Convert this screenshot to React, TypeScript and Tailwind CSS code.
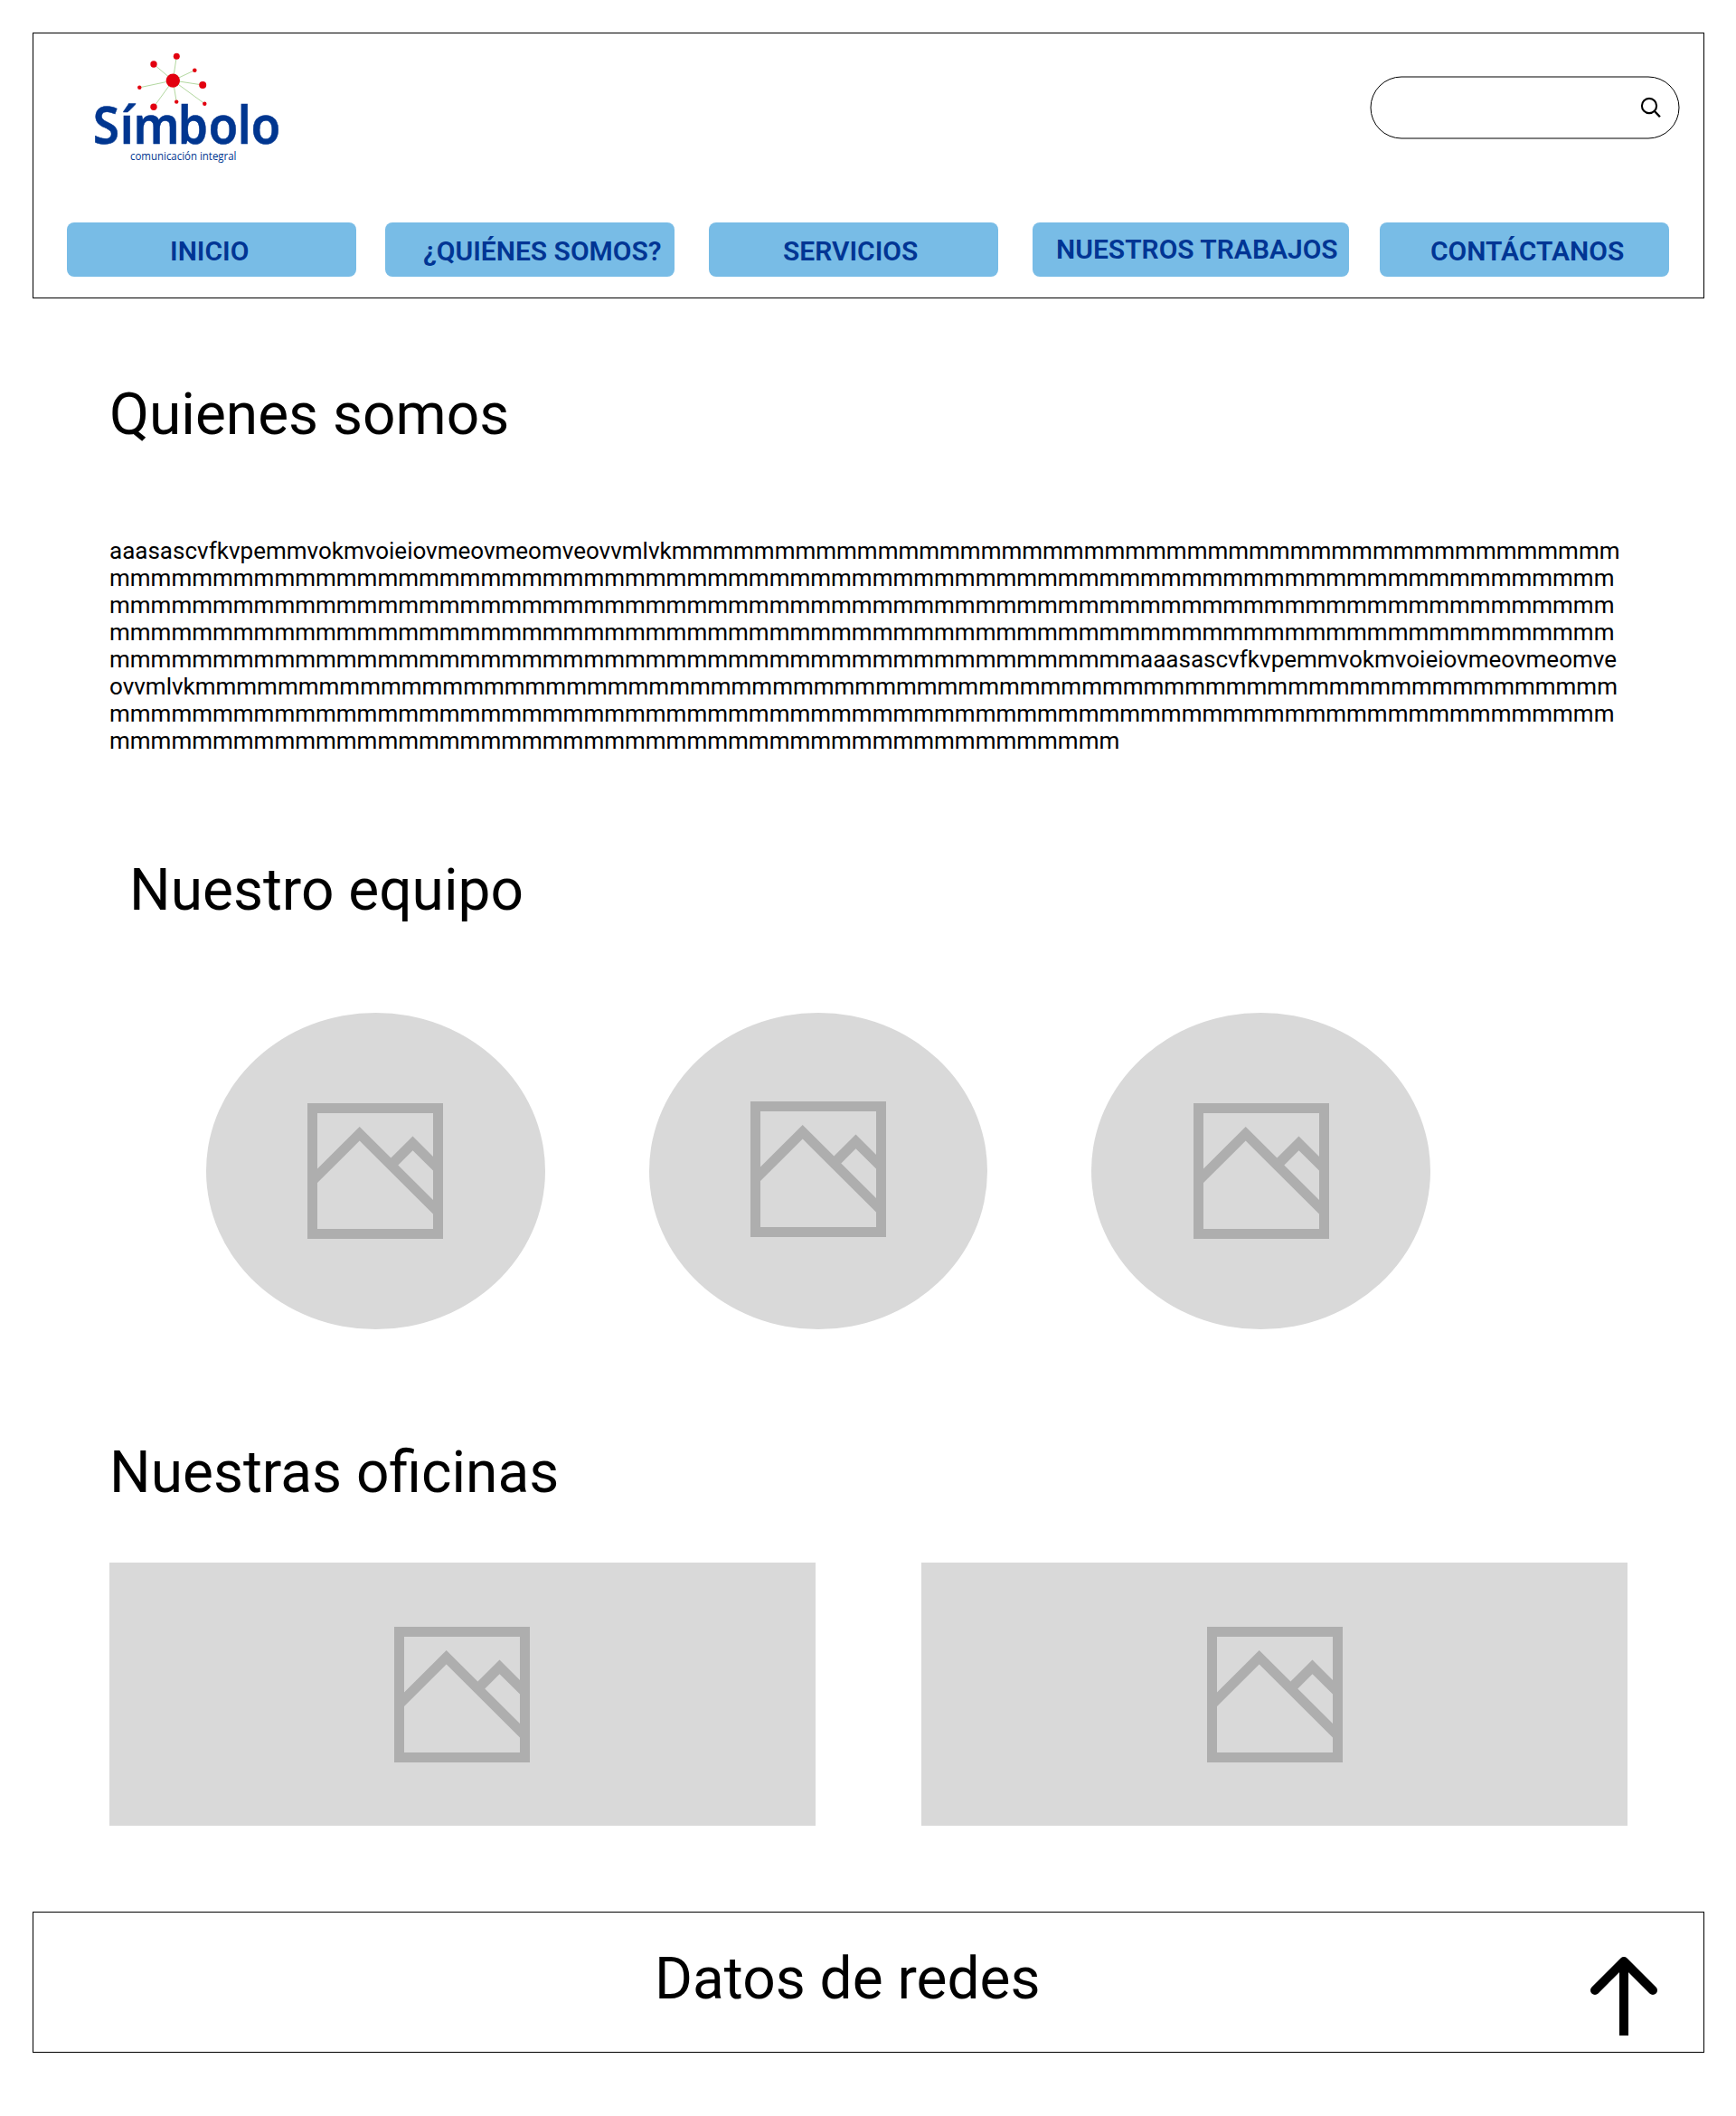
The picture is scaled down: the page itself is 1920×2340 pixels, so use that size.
const PHRASE = "aaasascvfkvpemmvokmvoieiovmeovmeomveovvmlvk";
const COPY = PHRASE + "m".repeat(315) + PHRASE + "m".repeat(191);

const HEADING = "h-[75px] text-[64px] leading-[75px] whitespace-nowrap";

const NAV = [
  { label: "INICIO", box: "w-[320px] pl-[114px] pt-[14px]" },
  { label: "¿QUIÉNES SOMOS?", box: "ml-[32px] w-[320px] pl-[42px] pt-[14px]" },
  { label: "SERVICIOS", box: "ml-[38px] w-[320px] pl-[82px] pt-[14px]" },
  { label: "NUESTROS TRABAJOS", box: "ml-[38px] w-[350px] pl-[26px] pt-[12px]" },
  { label: "CONTÁCTANOS", box: "ml-[34px] w-[320px] pl-[56px] pt-[14px]" },
];

const NODES = [
  [115.3, 22.3, 3.5],
  [90, 31, 3.7],
  [135.3, 37.7, 2.3],
  [144.2, 54, 4],
  [74.3, 56.8, 2.2],
  [115.2, 72.6, 2.2],
  [146.3, 74.7, 2.2],
  [90, 78.3, 3.7],
];

function Logo() {
  return (
    <svg className="h-40 w-[260px]" viewBox="0 0 260 160">
      <g stroke="#a9d294" strokeWidth="0.9">
        {NODES.map(([x, y]) => (
          <line key={`${x}-${y}`} x1="111.3" y1="49" x2={x} y2={y} />
        ))}
      </g>
      <g fill="#003690">
        <text
          x="24.8 57.4 73.4 127 163.6 198.7 214.7"
          y="118.7"
          transform="scale(0.92 1)"
          fontSize="58"
          fontWeight="600"
          fontFamily="'Noto Sans', sans-serif"
          stroke="#003690"
          strokeWidth="0.5"
        >
          Símbolo
        </text>
        <text
          x="64"
          y="137"
          fontSize="13.5"
          fontWeight="400"
          fontFamily="'Open Sans', sans-serif"
          textLength="117.5"
          lengthAdjust="spacingAndGlyphs"
        >
          comunicación integral
        </text>
      </g>
      <g fill="#e2000f">
        <circle cx="111.3" cy="49.1" r="7.7" />
        {NODES.map(([x, y, r]) => (
          <circle key={`${x}-${y}`} cx={x} cy={y} r={r} />
        ))}
      </g>
    </svg>
  );
}

function Placeholder({ className = "" }: { className?: string }) {
  return (
    <svg className={`h-[150px] w-[150px] shrink-0 ${className}`} viewBox="0 0 150 150" fill="#aeaeae">
      <path fillRule="evenodd" d="M0 0H150V150H0ZM11 11V139H139V11Z" />
      <path d="M10 73.4 57.7 26 92.4 60.5 116.5 36.5 140 60V75.6L116.5 52.2 100.3 68.4 140 108V123.6L57.7 41.6 10 89Z" />
    </svg>
  );
}

export default function App() {
  return (
    <div className="flex h-[2340px] w-[1920px] flex-col bg-white px-9 pt-9 font-['Roboto',sans-serif] text-black">
      <header className="mr-[-1px] flex h-[294px] flex-col border border-black">
        <div className="flex h-[209px] shrink-0 justify-between">
          <div className="pt-[3px] pl-[43px]">
            <Logo />
          </div>
          <div className="mt-[47px] mr-[27px] flex h-[69px] w-[342px] translate-x-[0.5px] translate-y-[0.5px] items-center justify-end rounded-full border border-black">
            <svg className="mr-[19px] h-6 w-6" viewBox="0 0 24 24" fill="none" stroke="black">
              <circle cx="10.5" cy="9.5" r="8.1" strokeWidth="2.1" />
              <path d="M16.2 15.2 22.4 21.8" strokeWidth="2.4" />
            </svg>
          </div>
        </div>
        <nav className="flex pl-[37px]">
          {NAV.map((item) => (
            <a
              key={item.label}
              className={`h-[60px] shrink-0 rounded-lg bg-[#78bce6] text-[30px] leading-[35px] font-semibold whitespace-nowrap text-[#003594] ${item.box}`}
            >
              {item.label}
            </a>
          ))}
        </nav>
      </header>

      <main className="flex flex-col pl-[85px]">
        <h1 className={`mt-[91px] ${HEADING}`}>Quienes somos</h1>
        <p className="mt-[98px] h-[240px] w-[1679px] text-[26px] leading-[30px] break-all">{COPY}</p>

        <h2 className={`mt-[113px] ml-[22px] ${HEADING}`}>Nuestro equipo</h2>
        <div className="mt-[98px] flex pl-[107px]">
          <div className="h-[350px] w-[375px] rounded-[50%] bg-[#d9d9d9] pt-[100px] pl-[112px]">
            <Placeholder />
          </div>
          <div className="ml-[115px] h-[350px] w-[374px] rounded-[50%] bg-[#d9d9d9] pt-[98px] pl-[112px]">
            <Placeholder />
          </div>
          <div className="ml-[115px] h-[350px] w-[375px] rounded-[50%] bg-[#d9d9d9] pt-[100px] pl-[113px]">
            <Placeholder />
          </div>
        </div>

        <h2 className={`mt-[121px] ${HEADING}`}>Nuestras oficinas</h2>
        <div className="mt-[62px] flex gap-[117px]">
          <div className="h-[291px] w-[781px] bg-[#d9d9d9] pt-[71px] pl-[315px]">
            <Placeholder />
          </div>
          <div className="h-[291px] w-[781px] bg-[#d9d9d9] pt-[71px] pl-[316px]">
            <Placeholder />
          </div>
        </div>
      </main>

      <footer className="mt-[95px] mr-[-1px] flex h-[156px] shrink-0 justify-between border border-black">
        <p className={`mt-[36px] ml-[687px] ${HEADING}`}>Datos de redes</p>
        <svg className="mt-[47px] mr-[50px] h-[90px] w-[76px]" viewBox="0 0 76 90" fill="none" stroke="black" strokeWidth="10">
          <path d="M6 39 38 7 70 39" strokeLinecap="round" strokeLinejoin="round" />
          <path d="M38 7V89" />
        </svg>
      </footer>
    </div>
  );
}
